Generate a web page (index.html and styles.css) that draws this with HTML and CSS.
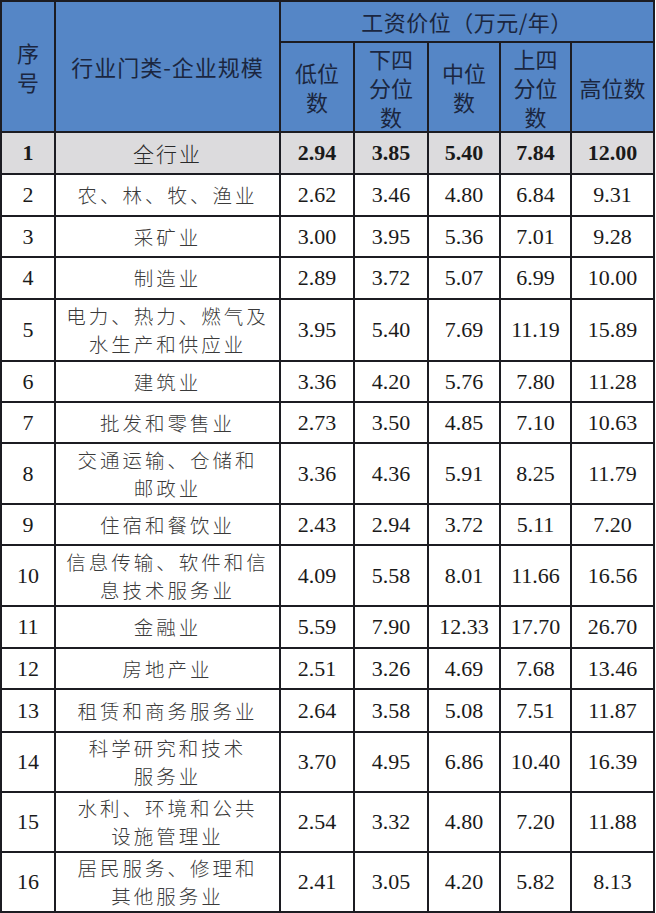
FILE: index.html
```html
<!DOCTYPE html>
<html lang="zh">
<head>
<meta charset="utf-8">
<link rel="stylesheet" href="styles.css">
</head>
<body>
<table class="wage">
  <colgroup>
    <col class="c-no"><col class="c-ind"><col class="c-a"><col class="c-b"><col class="c-c"><col class="c-d"><col class="c-e">
  </colgroup>
  <thead>
    <tr class="h1">
      <th rowspan="2" class="stack">序<br>号</th>
      <th rowspan="2" class="wide">行业门类-企业规模</th>
      <th colspan="5" class="title">工资价位（万元/年）</th>
    </tr>
    <tr class="h2">
      <th class="stack">低位<br>数</th>
      <th class="stack">下四<br>分位<br>数</th>
      <th class="stack">中位<br>数</th>
      <th class="stack">上四<br>分位<br>数</th>
      <th>高位数</th>
    </tr>
  </thead>
  <tbody>
    <tr class="total r42"><td class="num">1</td><td class="ind">全行业</td><td class="num">2.94</td><td class="num">3.85</td><td class="num">5.40</td><td class="num">7.84</td><td class="num">12.00</td></tr>
    <tr class="r42"><td class="num">2</td><td class="ind">农、林、牧、渔业</td><td class="num">2.62</td><td class="num">3.46</td><td class="num">4.80</td><td class="num">6.84</td><td class="num">9.31</td></tr>
    <tr class="r41"><td class="num">3</td><td class="ind">采矿业</td><td class="num">3.00</td><td class="num">3.95</td><td class="num">5.36</td><td class="num">7.01</td><td class="num">9.28</td></tr>
    <tr class="r42"><td class="num">4</td><td class="ind">制造业</td><td class="num">2.89</td><td class="num">3.72</td><td class="num">5.07</td><td class="num">6.99</td><td class="num">10.00</td></tr>
    <tr class="r62"><td class="num">5</td><td class="ind">电力、热力、燃气及<br>水生产和供应业</td><td class="num">3.95</td><td class="num">5.40</td><td class="num">7.69</td><td class="num">11.19</td><td class="num">15.89</td></tr>
    <tr class="r41"><td class="num">6</td><td class="ind">建筑业</td><td class="num">3.36</td><td class="num">4.20</td><td class="num">5.76</td><td class="num">7.80</td><td class="num">11.28</td></tr>
    <tr class="r41"><td class="num">7</td><td class="ind">批发和零售业</td><td class="num">2.73</td><td class="num">3.50</td><td class="num">4.85</td><td class="num">7.10</td><td class="num">10.63</td></tr>
    <tr class="r61"><td class="num">8</td><td class="ind">交通运输、仓储和<br>邮政业</td><td class="num">3.36</td><td class="num">4.36</td><td class="num">5.91</td><td class="num">8.25</td><td class="num">11.79</td></tr>
    <tr class="r41"><td class="num">9</td><td class="ind">住宿和餐饮业</td><td class="num">2.43</td><td class="num">2.94</td><td class="num">3.72</td><td class="num">5.11</td><td class="num">7.20</td></tr>
    <tr class="r61"><td class="num">10</td><td class="ind">信息传输、软件和信<br>息技术服务业</td><td class="num">4.09</td><td class="num">5.58</td><td class="num">8.01</td><td class="num">11.66</td><td class="num">16.56</td></tr>
    <tr class="r42"><td class="num">11</td><td class="ind">金融业</td><td class="num">5.59</td><td class="num">7.90</td><td class="num">12.33</td><td class="num">17.70</td><td class="num">26.70</td></tr>
    <tr class="r41"><td class="num">12</td><td class="ind">房地产业</td><td class="num">2.51</td><td class="num">3.26</td><td class="num">4.69</td><td class="num">7.68</td><td class="num">13.46</td></tr>
    <tr class="r43"><td class="num">13</td><td class="ind">租赁和商务服务业</td><td class="num">2.64</td><td class="num">3.58</td><td class="num">5.08</td><td class="num">7.51</td><td class="num">11.87</td></tr>
    <tr class="r60"><td class="num">14</td><td class="ind">科学研究和技术<br>服务业</td><td class="num">3.70</td><td class="num">4.95</td><td class="num">6.86</td><td class="num">10.40</td><td class="num">16.39</td></tr>
    <tr class="r60"><td class="num">15</td><td class="ind">水利、环境和公共<br>设施管理业</td><td class="num">2.54</td><td class="num">3.32</td><td class="num">4.80</td><td class="num">7.20</td><td class="num">11.88</td></tr>
    <tr class="r60"><td class="num">16</td><td class="ind">居民服务、修理和<br>其他服务业</td><td class="num">2.41</td><td class="num">3.05</td><td class="num">4.20</td><td class="num">5.82</td><td class="num">8.13</td></tr>
  </tbody>
</table>
</body>
</html>
```

FILE: styles.css
```css
html, body {
  margin: 0;
  padding: 0;
  background: #ffffff;
}

.wage {
  border-collapse: collapse;
  table-layout: fixed;
  width: 653px;
  margin: 0;
}

.c-no { width: 54px; }
.c-ind { width: 225px; }
.c-a { width: 74px; }
.c-b { width: 74px; }
.c-c { width: 72px; }
.c-d { width: 71px; }
.c-e { width: 83px; }

.wage th,
.wage td {
  border: 2px solid #1c1c22;
  padding: 0;
  text-align: center;
  vertical-align: middle;
}

.wage th {
  background: #5586c6;
  color: #1b2640;
  font-family: "Noto Sans CJK SC", "Noto Sans", sans-serif;
  font-weight: 400;
  font-size: 22px;
  line-height: 29px;
}

.wage th.wide {
  letter-spacing: 1px;
}

.wage th.title {
  letter-spacing: 0.5px;
}

.h1 { height: 41px; }
.h2 { height: 90px; }

.wage td.num {
  font-family: "Liberation Serif", "Times New Roman", serif;
  font-size: 22px;
  color: #1a1a1a;
}

.wage td.ind {
  font-family: "Noto Sans CJK SC", sans-serif;
  font-weight: 300;
  font-size: 19.5px;
  letter-spacing: 3px;
  line-height: 28px;
  color: #3a3a3a;
}

.total td {
  background: #dcdbdd;
}

.wage .total td.num {
  font-weight: bold;
}

.wage .total td.ind {
  font-size: 21px;
  letter-spacing: 2px;
  color: #2a2a2a;
}

.r41 { height: 41px; }
.r42 { height: 42px; }
.r43 { height: 43px; }
.r60 { height: 60px; }
.r61 { height: 61px; }
.r62 { height: 62px; }
```
